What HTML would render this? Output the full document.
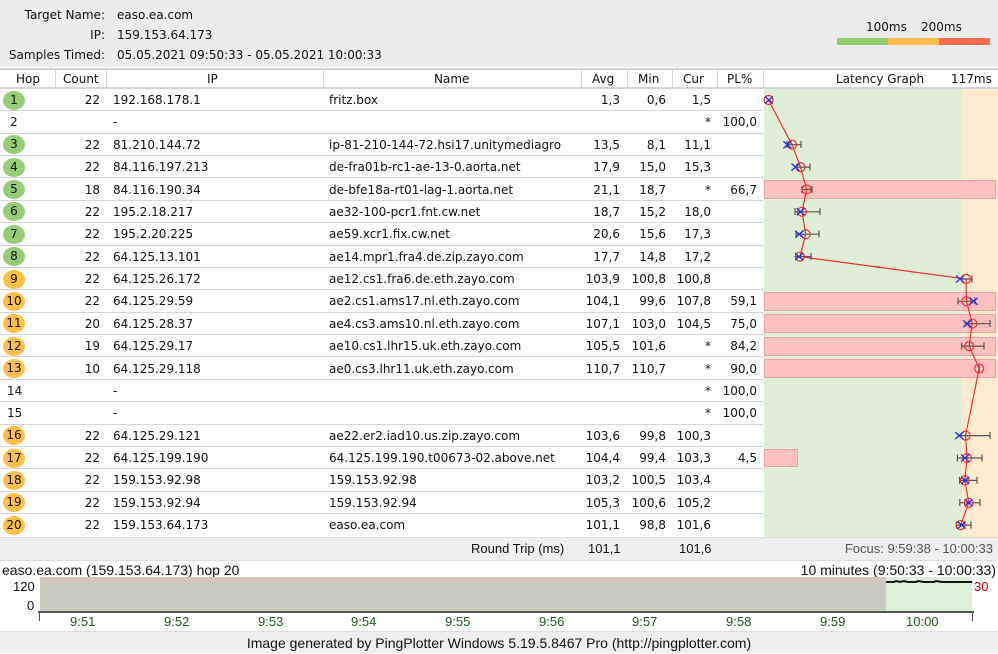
<!DOCTYPE html>
<html><head><meta charset="utf-8"><style>
*{margin:0;padding:0;box-sizing:border-box}
body{width:998px;height:653px;background:#fff;font-family:"DejaVu Sans","Liberation Sans",sans-serif;font-size:12px;color:#111;position:relative;overflow:hidden}
.a{position:absolute;white-space:nowrap}
.hdr{left:0;top:0;width:998px;height:67px;background:#ececec}
.th{top:68px;height:21px;background:#fff;border-top:2px solid #d4d4d4;border-bottom:2px solid #d4d4d4;width:998px;left:0}
.th span{position:absolute;top:2px}
.vl{position:absolute;top:0;width:1px;height:17px;background:#d8d8d8}
.r{position:absolute;left:0;width:763px;height:22.37px;border-bottom:1px solid #d6d6d6}
.r span{position:absolute;top:4px}
.hop{left:3px;width:22px;height:19px;border-radius:50%;top:1.5px!important;text-align:center;line-height:19px}
.g{background:#97cc78}.o{background:#ffc04a}
.c{right:663px}.ip{left:113px}.nm{left:329px}.av{right:143px}.mn{right:97px}.cu{right:52px}.pl{right:6px}
.bot{font-family:"Liberation Sans",sans-serif;font-size:13px}
</style></head><body>
<div class="a hdr"></div>
<div class="a" style="left:7px;top:8px;width:98px;text-align:right">Target Name:</div>
<div class="a" style="left:117px;top:8px">easo.ea.com</div>
<div class="a" style="left:7px;top:28px;width:98px;text-align:right">IP:</div>
<div class="a" style="left:117px;top:28px">159.153.64.173</div>
<div class="a" style="left:7px;top:48px;width:98px;text-align:right">Samples Timed:</div>
<div class="a" style="left:117px;top:48px">05.05.2021 09:50:33 - 05.05.2021 10:00:33</div>
<div class="a" style="left:866px;top:20px">100ms</div>
<div class="a" style="left:921px;top:20px">200ms</div>
<div class="a" style="left:837px;top:38px;width:51px;height:7px;background:#97cc6e"></div>
<div class="a" style="left:888px;top:38px;width:51px;height:7px;background:#ffbf50"></div>
<div class="a" style="left:939px;top:38px;width:51px;height:7px;background:#ff6a50"></div>

<div class="a th">
<span style="left:16px">Hop</span><span style="left:63px">Count</span><span style="left:207px">IP</span><span style="left:434px">Name</span>
<span style="left:592px">Avg</span><span style="left:638px">Min</span><span style="left:683px">Cur</span><span style="left:727px">PL%</span>
<span style="left:836px">Latency Graph</span><span style="left:951px">117ms</span>
<div class="vl" style="left:55px"></div><div class="vl" style="left:106px"></div><div class="vl" style="left:323px"></div><div class="vl" style="left:581px"></div><div class="vl" style="left:627px"></div><div class="vl" style="left:672px"></div><div class="vl" style="left:717px"></div><div class="vl" style="left:763px"></div>
</div>

<div class="a" style="left:764px;top:89px;width:198px;height:448px;background:#dfeed6"></div>
<div class="a" style="left:962px;top:89px;width:36px;height:448px;background:#fdebd0"></div>

<div class="r" style="top:89px"><span class="hop g">1</span><span class="c">22</span><span class="ip">192.168.178.1</span><span class="nm">fritz.box</span><span class="av">1,3</span><span class="mn">0,6</span><span class="cu">1,5</span></div>
<div class="r" style="top:111.4px"><span style="left:10px">2</span><span class="ip">-</span><span class="cu">*</span><span class="pl">100,0</span></div>
<div class="r" style="top:133.7px"><span class="hop g">3</span><span class="c">22</span><span class="ip">81.210.144.72</span><span class="nm">ip-81-210-144-72.hsi17.unitymediagro</span><span class="av">13,5</span><span class="mn">8,1</span><span class="cu">11,1</span></div>
<div class="r" style="top:156.1px"><span class="hop g">4</span><span class="c">22</span><span class="ip">84.116.197.213</span><span class="nm">de-fra01b-rc1-ae-13-0.aorta.net</span><span class="av">17,9</span><span class="mn">15,0</span><span class="cu">15,3</span></div>
<div class="r" style="top:178.5px"><span class="hop g">5</span><span class="c">18</span><span class="ip">84.116.190.34</span><span class="nm">de-bfe18a-rt01-lag-1.aorta.net</span><span class="av">21,1</span><span class="mn">18,7</span><span class="cu">*</span><span class="pl">66,7</span></div>
<div class="r" style="top:200.9px"><span class="hop g">6</span><span class="c">22</span><span class="ip">195.2.18.217</span><span class="nm">ae32-100-pcr1.fnt.cw.net</span><span class="av">18,7</span><span class="mn">15,2</span><span class="cu">18,0</span></div>
<div class="r" style="top:223.2px"><span class="hop g">7</span><span class="c">22</span><span class="ip">195.2.20.225</span><span class="nm">ae59.xcr1.fix.cw.net</span><span class="av">20,6</span><span class="mn">15,6</span><span class="cu">17,3</span></div>
<div class="r" style="top:245.6px"><span class="hop g">8</span><span class="c">22</span><span class="ip">64.125.13.101</span><span class="nm">ae14.mpr1.fra4.de.zip.zayo.com</span><span class="av">17,7</span><span class="mn">14,8</span><span class="cu">17,2</span></div>
<div class="r" style="top:268px"><span class="hop o">9</span><span class="c">22</span><span class="ip">64.125.26.172</span><span class="nm">ae12.cs1.fra6.de.eth.zayo.com</span><span class="av">103,9</span><span class="mn">100,8</span><span class="cu">100,8</span></div>
<div class="r" style="top:290.3px"><span class="hop o">10</span><span class="c">22</span><span class="ip">64.125.29.59</span><span class="nm">ae2.cs1.ams17.nl.eth.zayo.com</span><span class="av">104,1</span><span class="mn">99,6</span><span class="cu">107,8</span><span class="pl">59,1</span></div>
<div class="r" style="top:312.7px"><span class="hop o">11</span><span class="c">20</span><span class="ip">64.125.28.37</span><span class="nm">ae4.cs3.ams10.nl.eth.zayo.com</span><span class="av">107,1</span><span class="mn">103,0</span><span class="cu">104,5</span><span class="pl">75,0</span></div>
<div class="r" style="top:335.1px"><span class="hop o">12</span><span class="c">19</span><span class="ip">64.125.29.17</span><span class="nm">ae10.cs1.lhr15.uk.eth.zayo.com</span><span class="av">105,5</span><span class="mn">101,6</span><span class="cu">*</span><span class="pl">84,2</span></div>
<div class="r" style="top:357.5px"><span class="hop o">13</span><span class="c">10</span><span class="ip">64.125.29.118</span><span class="nm">ae0.cs3.lhr11.uk.eth.zayo.com</span><span class="av">110,7</span><span class="mn">110,7</span><span class="cu">*</span><span class="pl">90,0</span></div>
<div class="r" style="top:379.8px"><span style="left:7px">14</span><span class="ip">-</span><span class="cu">*</span><span class="pl">100,0</span></div>
<div class="r" style="top:402.2px"><span style="left:7px">15</span><span class="ip">-</span><span class="cu">*</span><span class="pl">100,0</span></div>
<div class="r" style="top:424.6px"><span class="hop o">16</span><span class="c">22</span><span class="ip">64.125.29.121</span><span class="nm">ae22.er2.iad10.us.zip.zayo.com</span><span class="av">103,6</span><span class="mn">99,8</span><span class="cu">100,3</span></div>
<div class="r" style="top:447px"><span class="hop o">17</span><span class="c">22</span><span class="ip">64.125.199.190</span><span class="nm">64.125.199.190.t00673-02.above.net</span><span class="av">104,4</span><span class="mn">99,4</span><span class="cu">103,3</span><span class="pl">4,5</span></div>
<div class="r" style="top:469.3px"><span class="hop o">18</span><span class="c">22</span><span class="ip">159.153.92.98</span><span class="nm">159.153.92.98</span><span class="av">103,2</span><span class="mn">100,5</span><span class="cu">103,4</span></div>
<div class="r" style="top:491.7px"><span class="hop o">19</span><span class="c">22</span><span class="ip">159.153.92.94</span><span class="nm">159.153.92.94</span><span class="av">105,3</span><span class="mn">100,6</span><span class="cu">105,2</span></div>
<div class="r" style="top:514.1px;border-bottom:none"><span class="hop o">20</span><span class="c">22</span><span class="ip">159.153.64.173</span><span class="nm">easo.ea.com</span><span class="av">101,1</span><span class="mn">98,8</span><span class="cu">101,6</span></div>

<svg class="a" style="left:0;top:0" width="998" height="540" viewBox="0 0 998 540">
<g fill="#ffc0c0" stroke="#e8a4a4" stroke-width="1">
<rect x="764.5" y="180.5" width="231" height="18"/>
<rect x="764.5" y="292.5" width="231" height="18"/>
<rect x="764.5" y="314.5" width="231" height="18"/>
<rect x="764.5" y="337.5" width="231" height="18"/>
<rect x="764.5" y="359.5" width="231" height="18"/>
<rect x="764.5" y="449.5" width="33" height="17"/>
</g>
<polyline fill="none" stroke="#f03030" stroke-width="1.2" points="768.5,100 792,144.7 800.5,167.1 806.6,189.5 802,211.8 805.7,234.2 800,256.6 966,279 966.5,301.3 972.3,323.7 969.2,346.1 979.2,368.5 965.5,435.6 967,458 964.8,480.4 968.8,502.8 960.7,525.1"/>
<g stroke="#555" stroke-width="1.2" fill="none">
<path d="M787,144.7H801M787,141v7M801,141v7"/>
<path d="M795,167.1H810M810,163.5v7"/>
<path d="M802,189.5H812M802,186v7M812,186v7"/>
<path d="M795,211.8H820M795,208v7M820,208v7"/>
<path d="M796,234.2H819M796,230.5v7M819,230.5v7"/>
<path d="M794.5,256.6H811M811,253v7"/>
<path d="M960,279H972M972,275.5v7"/>
<path d="M958,301.3H975M958,297.5v7M975,297.5v7"/>
<path d="M964.4,323.7H990M990,320v7"/>
<path d="M961.7,346.1H984M961.7,342.5v7M984,342.5v7"/>
<path d="M979.2,365v7"/>
<path d="M958,435.6H990M990,432v7"/>
<path d="M957.4,458H982M957.4,454.5v7M982,454.5v7"/>
<path d="M959.6,480.4H977M959.6,476.8v7M977,476.8v7"/>
<path d="M959.8,502.8H980M959.8,499v7M980,499v7"/>
<path d="M956.3,525.1H971M956.3,521.5v7M971,521.5v7"/>
</g>
<g stroke="#f03030" stroke-width="1.2" fill="none">
<circle cx="768.5" cy="100" r="4.5"/><circle cx="792" cy="144.7" r="4.5"/><circle cx="800.5" cy="167.1" r="4.5"/><circle cx="806.6" cy="189.5" r="4.5"/><circle cx="802" cy="211.8" r="4.5"/><circle cx="805.7" cy="234.2" r="4.5"/><circle cx="800" cy="256.6" r="4.5"/><circle cx="966" cy="279" r="4.5"/><circle cx="966.5" cy="301.3" r="4.5"/><circle cx="972.3" cy="323.7" r="4.5"/><circle cx="969.2" cy="346.1" r="4.5"/><circle cx="979.2" cy="368.5" r="4.5"/><circle cx="965.5" cy="435.6" r="4.5"/><circle cx="967" cy="458" r="4.5"/><circle cx="964.8" cy="480.4" r="4.5"/><circle cx="968.8" cy="502.8" r="4.5"/><circle cx="960.7" cy="525.1" r="4.5"/>
</g>
<g stroke="#2030e0" stroke-width="1.3">
<path d="M765,96.5l8,7M773,96.5l-8,7"/>
<path d="M783.4,141.2l8,7M791.4,141.2l-8,7"/>
<path d="M791.5,163.6l8,7M799.5,163.6l-8,7"/>
<path d="M796.7,208.3l8,7M804.7,208.3l-8,7"/>
<path d="M795.3,230.7l8,7M803.3,230.7l-8,7"/>
<path d="M795,253.1l8,7M803,253.1l-8,7"/>
<path d="M956,275.5l8,7M964,275.5l-8,7"/>
<path d="M969.6,297.8l8,7M977.6,297.8l-8,7"/>
<path d="M963.3,320.2l8,7M971.3,320.2l-8,7"/>
<path d="M955.2,432.1l8,7M963.2,432.1l-8,7"/>
<path d="M961,454.5l8,7M969,454.5l-8,7"/>
<path d="M961.2,476.9l8,7M969.2,476.9l-8,7"/>
<path d="M964.6,499.3l8,7M972.6,499.3l-8,7"/>
<path d="M957.7,521.6l8,7M965.7,521.6l-8,7"/>
</g>
</svg>

<div class="a bot" style="left:0;top:537px;width:998px;height:24px;background:#efefef;border-top:1px solid #ddd;border-bottom:1px solid #ddd"></div>
<div class="a bot" style="left:471px;top:541px">Round Trip (ms)</div>
<div class="a bot" style="left:588px;top:541px">101,1</div>
<div class="a bot" style="left:679px;top:541px">101,6</div>
<div class="a bot" style="right:5px;top:541px;color:#555">Focus: 9:59:38 - 10:00:33</div>

<div class="a bot" style="left:2px;top:562px;font-size:14px">easo.ea.com (159.153.64.173) hop 20</div>
<div class="a bot" style="right:2px;top:562px;font-size:14px">10 minutes (9:50:33 - 10:00:33)</div>
<div class="a" style="left:40px;top:577px;width:846px;height:34px;background:#c8cbbf"></div>
<div class="a" style="left:40px;top:577px;width:846px;height:6px;background:#d2c8bc"></div>
<div class="a" style="left:886px;top:577px;width:86px;height:34px;background:#dff0d8"></div>
<svg class="a" style="left:886px;top:577px" width="86" height="10"><polyline fill="none" stroke="#111" stroke-width="2" points="0,5 8,5 10,4 14,5 18,4 22,5 30,5 32,4 38,5 48,5 50,4 56,5 86,5"/></svg>
<div class="a bot" style="left:13px;top:579px">120</div>
<div class="a bot" style="left:27px;top:598px">0</div>
<div class="a bot" style="left:974px;top:579px;color:#c00000">30</div>
<div class="a" style="left:38px;top:611px;width:936px;height:2px;background:#555"></div>
<div class="a" style="left:39px;top:611px;width:1px;height:10px;background:#555"></div>
<div class="a" style="left:972px;top:611px;width:1px;height:10px;background:#555"></div>
<div class="a bot" style="top:614px;left:0;width:998px;color:#1d5a1d">
<span class="a" style="left:70px">9:51</span><span class="a" style="left:164px">9:52</span><span class="a" style="left:258px">9:53</span><span class="a" style="left:351px">9:54</span><span class="a" style="left:445px">9:55</span><span class="a" style="left:539px">9:56</span><span class="a" style="left:632px">9:57</span><span class="a" style="left:726px">9:58</span><span class="a" style="left:820px">9:59</span><span class="a" style="left:906px">10:00</span>
</div>
<div class="a bot" style="left:0;top:631px;width:998px;height:22px;background:#efefef;border-top:1px solid #ddd;text-align:center;line-height:22px;font-size:14px">Image generated by PingPlotter Windows 5.19.5.8467 Pro (http://pingplotter.com)</div>
</body></html>
